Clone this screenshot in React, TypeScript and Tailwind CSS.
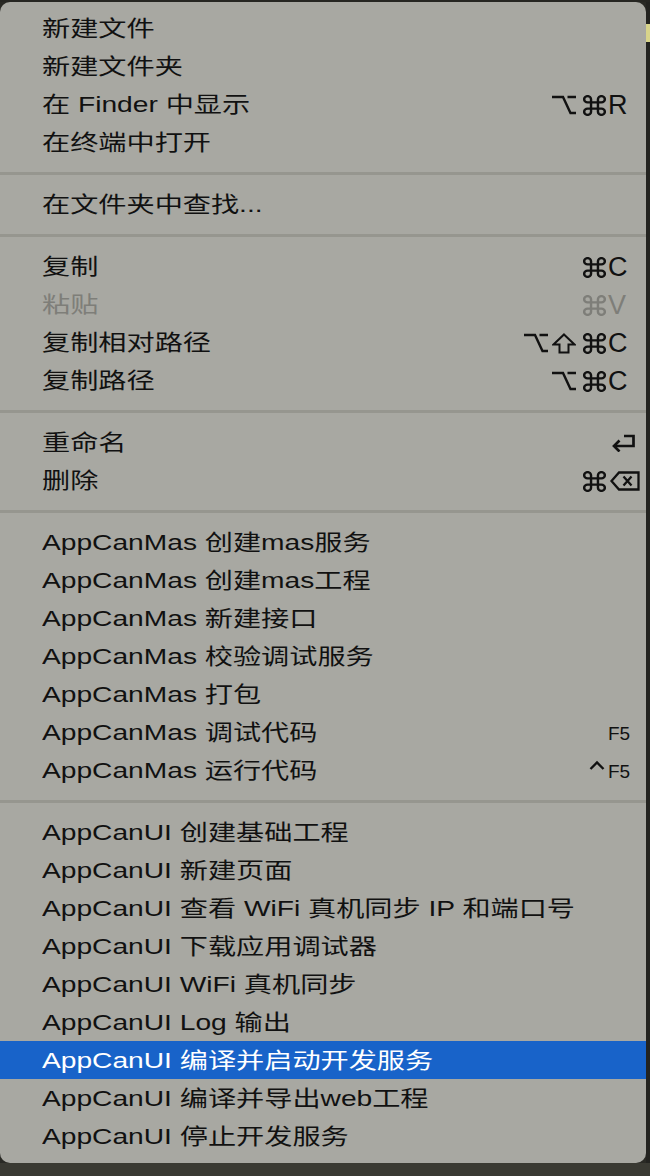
import React from "react";

type SC =
  | "optR"
  | "cmdC"
  | "cmdV"
  | "optShiftCmdC"
  | "optCmdC"
  | "enter"
  | "cmdDel"
  | "F5"
  | "ctrlF5";

type Item =
  | { label: string; sc?: SC; disabled?: boolean; active?: boolean }
  | "sep";

const items: Item[] = [
  { label: "新建文件" },
  { label: "新建文件夹" },
  { label: "在 Finder 中显示", sc: "optR" },
  { label: "在终端中打开" },
  "sep",
  { label: "在文件夹中查找..." },
  "sep",
  { label: "复制", sc: "cmdC" },
  { label: "粘贴", sc: "cmdV", disabled: true },
  { label: "复制相对路径", sc: "optShiftCmdC" },
  { label: "复制路径", sc: "optCmdC" },
  "sep",
  { label: "重命名", sc: "enter" },
  { label: "删除", sc: "cmdDel" },
  "sep",
  { label: "AppCanMas 创建mas服务" },
  { label: "AppCanMas 创建mas工程" },
  { label: "AppCanMas 新建接口" },
  { label: "AppCanMas 校验调试服务" },
  { label: "AppCanMas 打包" },
  { label: "AppCanMas 调试代码", sc: "F5" },
  { label: "AppCanMas 运行代码", sc: "ctrlF5" },
  "sep",
  { label: "AppCanUI 创建基础工程" },
  { label: "AppCanUI 新建页面" },
  { label: "AppCanUI 查看 WiFi 真机同步 IP 和端口号" },
  { label: "AppCanUI 下载应用调试器" },
  { label: "AppCanUI WiFi 真机同步" },
  { label: "AppCanUI Log 输出" },
  { label: "AppCanUI 编译并启动开发服务", active: true },
  { label: "AppCanUI 编译并导出web工程" },
  { label: "AppCanUI 停止开发服务" },
];

const Opt = () => (
  <svg width="24" height="20" viewBox="0 0 24 20" fill="none" stroke="currentColor" strokeWidth="2.4">
    <path d="M0 2H11L18.5 18H24M15.5 2H24" />
  </svg>
);

const Cmd = () => (
  <svg width="23" height="21" viewBox="2 2 20 20" preserveAspectRatio="none" fill="none" stroke="currentColor" strokeWidth="2.1">
    <path d="M15 6v12a3 3 0 1 0 3-3H6a3 3 0 1 0 3 3V6a3 3 0 1 0-3 3h12a3 3 0 1 0-3-3" />
  </svg>
);

const Shift = () => (
  <svg width="24" height="21" viewBox="0 0 24 21" fill="none" stroke="currentColor" strokeWidth="2">
    <path d="M12 1.5 22.5 11.5H16.5V19.5H7.5V11.5H1.5Z" />
  </svg>
);

const Enter = () => (
  <svg width="26" height="18" viewBox="0 0 26 18" fill="none" stroke="currentColor" strokeWidth="2.7">
    <path d="M14 2H23.5V12H4" />
    <path d="M9.5 6.5 4 12 9.5 17.5" />
  </svg>
);

const Del = () => (
  <svg width="30" height="20" viewBox="0 0 30 20" fill="none" stroke="currentColor" strokeWidth="2.3" className="shrink-0">
    <path d="M9 1.5H28.5V18.5H9L1.5 10Z" />
    <path d="M13.5 5.5 21.5 14.5M21.5 5.5 13.5 14.5" />
  </svg>
);

const Caret = () => (
  <svg width="16" height="22" viewBox="0 0 16 22" fill="none" stroke="currentColor" strokeWidth="2.4">
    <path d="M1.5 9 8 2.5 14.5 9" />
  </svg>
);

const Key = ({ k }: { k: string }) => (
  <span className="text-[27px] leading-none font-['Liberation_Sans',sans-serif]">{k}</span>
);

const F5 = () => (
  <span className="text-[19px] leading-none font-['Liberation_Sans',sans-serif]">F5</span>
);

function Shortcut({ sc }: { sc: SC }) {
  let s: (React.ReactNode | null)[] = [null, null, null, null];
  switch (sc) {
    case "optR":
      s = [null, <Opt />, <Cmd />, <Key k="R" />];
      break;
    case "cmdC":
      s = [null, null, <Cmd />, <Key k="C" />];
      break;
    case "cmdV":
      s = [null, null, <Cmd />, <Key k="V" />];
      break;
    case "optShiftCmdC":
      s = [<Opt />, <Shift />, <Cmd />, <Key k="C" />];
      break;
    case "optCmdC":
      s = [null, <Opt />, <Cmd />, <Key k="C" />];
      break;
    case "enter":
      s = [null, null, null, <span className="ml-[2px] flex"><Enter /></span>];
      break;
    case "cmdDel":
      s = [null, null, <Cmd />, <span className="ml-[2px] flex"><Del /></span>];
      break;
    case "F5":
      s = [null, null, null, <F5 />];
      break;
    case "ctrlF5":
      s = [null, null, <span className="ml-[5px] flex"><Caret /></span>, <F5 />];
      break;
  }
  return (
    <div className="flex items-center">
      <div className="w-[28px] flex items-center justify-start">{s[0]}</div>
      <div className="w-[28px] flex items-center justify-start">{s[1]}</div>
      <div className="w-[28px] flex items-center justify-center">{s[2]}</div>
      <div className="w-[28px] flex items-center justify-start">{s[3]}</div>
    </div>
  );
}

export default function App() {
  return (
    <div className="w-[650px] h-[1176px] bg-[#2a2a25] flex flex-col overflow-hidden">
      <div className="h-[2px] shrink-0 bg-[#262622]" />
      <div className="flex flex-row">
        <div className="w-[646px] h-[1161px] shrink-0 rounded-[10px] bg-[#a8a8a2] pt-[7px] pb-[8px] flex flex-col">
          {items.map((it, i) =>
            it === "sep" ? (
              <div key={i} className="h-[24px] flex items-center">
                <div className="h-[3px] w-full bg-[#96968f]" />
              </div>
            ) : (
              <div
                key={i}
                className={
                  "h-[38px] shrink-0 flex items-center justify-between pt-[2px] pl-[42px] pr-[10px] " +
                  (it.active
                    ? "bg-[#1863c9] text-white"
                    : it.disabled
                    ? "text-[#7e7e79]"
                    : "text-[#111111]")
                }
              >
                <span className="inline-block origin-left scale-x-[1.28] whitespace-nowrap text-[22px] leading-[36px] font-['Liberation_Sans','Noto_Sans_CJK_SC',sans-serif]">
                  {it.label}
                </span>
                {it.sc ? <Shortcut sc={it.sc} /> : null}
              </div>
            )
          )}
        </div>
        <div className="flex-1 flex flex-col bg-[#232320]">
          <div className="h-[22px]" />
          <div className="h-[18px] bg-[#d8d48a]" />
        </div>
      </div>
      <div className="flex-1 bg-[#3a3a33]" />
    </div>
  );
}
